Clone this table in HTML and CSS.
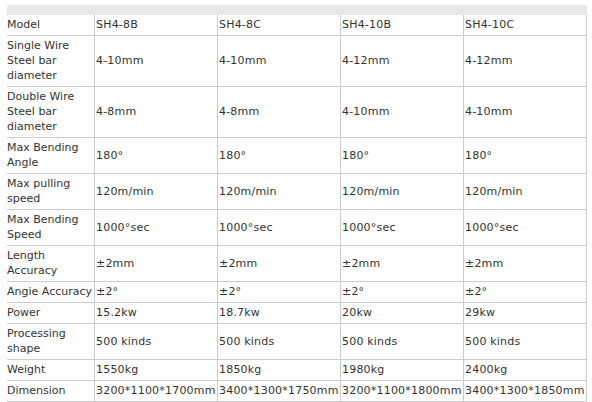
FILE: index.html
```html
<!DOCTYPE html>
<html>
<head>
<meta charset="utf-8">
<link rel="stylesheet" href="styles.css">
</head>
<body>
<div class="topbar"></div>
<table class="spec">
  <colgroup>
    <col class="c-label">
    <col class="c-val">
    <col class="c-val">
    <col class="c-val">
    <col class="c-val">
  </colgroup>
  <tbody>
    <tr><td>Model</td><td>SH4-8B</td><td>SH4-8C</td><td>SH4-10B</td><td>SH4-10C</td></tr>
    <tr><td>Single Wire Steel bar diameter</td><td>4-10mm</td><td>4-10mm</td><td>4-12mm</td><td>4-12mm</td></tr>
    <tr><td>Double Wire Steel bar diameter</td><td>4-8mm</td><td>4-8mm</td><td>4-10mm</td><td>4-10mm</td></tr>
    <tr><td>Max Bending Angle</td><td>180°</td><td>180°</td><td>180°</td><td>180°</td></tr>
    <tr><td>Max pulling speed</td><td>120m/min</td><td>120m/min</td><td>120m/min</td><td>120m/min</td></tr>
    <tr><td>Max Bending Speed</td><td>1000°sec</td><td>1000°sec</td><td>1000°sec</td><td>1000°sec</td></tr>
    <tr><td>Length Accuracy</td><td>±2mm</td><td>±2mm</td><td>±2mm</td><td>±2mm</td></tr>
    <tr><td class="nowrap">Angie Accuracy</td><td>±2°</td><td>±2°</td><td>±2°</td><td>±2°</td></tr>
    <tr><td>Power</td><td>15.2kw</td><td>18.7kw</td><td>20kw</td><td>29kw</td></tr>
    <tr><td>Processing shape</td><td>500 kinds</td><td>500 kinds</td><td>500 kinds</td><td>500 kinds</td></tr>
    <tr><td>Weight</td><td>1550kg</td><td>1850kg</td><td>1980kg</td><td>2400kg</td></tr>
    <tr><td>Dimension</td><td>3200*1100*1700mm</td><td>3400*1300*1750mm</td><td>3200*1100*1800mm</td><td>3400*1300*1850mm</td></tr>
  </tbody>
</table>
</body>
</html>
```
FILE: styles.css
```css
html, body {
  background: #ffffff;
}
body {
  margin: 5px 5px 0 7px;
  font-family: "DejaVu Sans", Verdana, sans-serif;
  font-size: 11px;
  color: #333333;
}
.topbar {
  width: 580px;
  height: 10px;
  background: #e8e8e8;
}
.spec {
  width: 580px;
  table-layout: fixed;
  border-collapse: separate;
  border-spacing: 0;
}
.c-label { width: 88px; }
.c-val { width: 123px; }
.spec td {
  padding: 2px 0 3px 1px;
  line-height: 15px;
  vertical-align: middle;
  border-right: 1px solid #cccccc;
  border-bottom: 1px solid #cccccc;
  white-space: nowrap;
  letter-spacing: 0.2px;
}
.spec td:first-child {
  padding-left: 0;
  letter-spacing: 0;
  white-space: normal;
}
.spec td.nowrap {
  white-space: nowrap;
}
```
